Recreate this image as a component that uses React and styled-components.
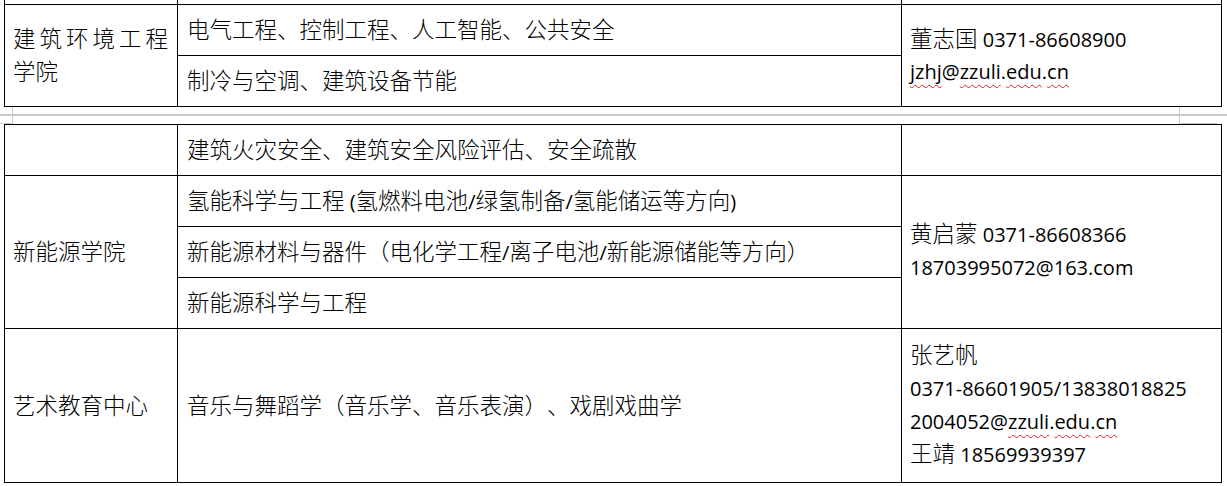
import React from 'react'
import styled, { createGlobalStyle } from 'styled-components'

const GlobalStyle = createGlobalStyle`
	body {
		margin: 0;
		background: #fff;
	}
`

const Page = styled.div`
	width: 1227px;
	height: 486px;
	overflow: hidden;
	font-family: "Noto Sans CJK SC", sans-serif;
	font-size: 22.5px;
	font-weight: 300;
	line-height: 33px;
	color: #000;
	text-spacing-trim: space-all;
`

const Table = styled.div`
	display: grid;
	grid-template-columns: 173px 724px 320px;
	grid-template-rows: ${(props) => props.$rows};
	width: 1218px;
	margin-left: 4px;
	box-sizing: border-box;
	border-left: 1px solid #000;
	border-top: ${(props) => (props.$open ? 'none' : '1px solid #000')};
`

const pads = {
	name: '0 9px 3px 8px',
	major: '0 8px 3px 9px',
	contact: '0 8px 6px 8px',
}

const Cell = styled.div`
	grid-row: span ${(props) => props.$span || 1};
	display: flex;
	flex-direction: column;
	justify-content: center;
	box-sizing: border-box;
	min-width: 0;
	padding: ${(props) => pads[props.$kind] || '0'};
	border-right: 1px solid #000;
	border-bottom: 1px solid #000;
	text-align: ${(props) => (props.$kind === 'name' ? 'justify' : 'left')};
	white-space: ${(props) => (props.$kind === 'name' ? 'normal' : 'nowrap')};
`

const Line = styled.div`
	display: block;
	height: ${(props) => props.$h || 33}px;
`

const Lat = styled.span`
	font-family: "Open Sans", "Liberation Sans", sans-serif;
	font-size: 20px;
	font-weight: 400;
`

const Typo = styled.span`
	text-decoration: underline wavy #e02020;
	text-decoration-thickness: 1px;
	text-underline-offset: 5px;
	text-decoration-skip-ink: none;
`

const PageGap = styled.div`
	display: flex;
	justify-content: space-between;
	height: 17px;
	padding-right: 10px;
	background: linear-gradient(#c8c8c8, #c8c8c8) 0 7px / 100% 2px no-repeat;
`

const MarginMark = styled.div`
	width: ${(props) => (props.$right ? '38px' : '13px')};
	height: 17px;
	box-sizing: border-box;
	border-bottom: 1px solid #c8c8c8;
	border-right: ${(props) => (props.$right ? 'none' : '1px solid #c8c8c8')};
	border-left: ${(props) => (props.$right ? '1px solid #c8c8c8' : 'none')};
`

const Email = ({ user, typoUser }) => (
	<Lat>
		{typoUser ? <Typo>{user}</Typo> : user}@<Typo>zzuli</Typo>.<Typo>edu</Typo>.<Typo>cn</Typo>
	</Lat>
)

const App = () => {
	return (
		<>
			<GlobalStyle />
			<Page>
				<Table $open $rows="5px 51px 51px">
					<Cell />
					<Cell />
					<Cell />
					<Cell $kind="name" $span={2}>建筑环境工程学院</Cell>
					<Cell $kind="major">电气工程、控制工程、人工智能、公共安全</Cell>
					<Cell $kind="contact" $span={2}>
						<Line $h={32}>董志国<Lat> 0371-86608900</Lat></Line>
						<Line $h={32}><Email user="jzhj" typoUser /></Line>
					</Cell>
					<Cell $kind="major">制冷与空调、建筑设备节能</Cell>
				</Table>

				<PageGap>
					<MarginMark />
					<MarginMark $right />
				</PageGap>

				<Table $rows="51px 51px 51px 51px 154px">
					<Cell />
					<Cell $kind="major">建筑火灾安全、建筑安全风险评估、安全疏散</Cell>
					<Cell />

					<Cell $kind="name" $span={3}>新能源学院</Cell>
					<Cell $kind="major">
						<Line>氢能科学与工程<Lat> (</Lat>氢燃料电池<Lat>/</Lat>绿氢制备<Lat>/</Lat>氢能储运等方向<Lat>)</Lat></Line>
					</Cell>
					<Cell $kind="contact" $span={3}>
						<Line>黄启蒙<Lat> 0371-86608366</Lat></Line>
						<Line><Lat>18703995072@163.com</Lat></Line>
					</Cell>
					<Cell $kind="major">
						<Line>新能源材料与器件（电化学工程<Lat>/</Lat>离子电池<Lat>/</Lat>新能源储能等方向）</Line>
					</Cell>
					<Cell $kind="major">新能源科学与工程</Cell>

					<Cell $kind="name">艺术教育中心</Cell>
					<Cell $kind="major">音乐与舞蹈学（音乐学、音乐表演）、戏剧戏曲学</Cell>
					<Cell $kind="contact">
						<Line>张艺帆</Line>
						<Line><Lat>0371-86601905/13838018825</Lat></Line>
						<Line><Email user="2004052" /></Line>
						<Line>王靖<Lat> 18569939397</Lat></Line>
					</Cell>
				</Table>
			</Page>
		</>
	)
}

export default App
